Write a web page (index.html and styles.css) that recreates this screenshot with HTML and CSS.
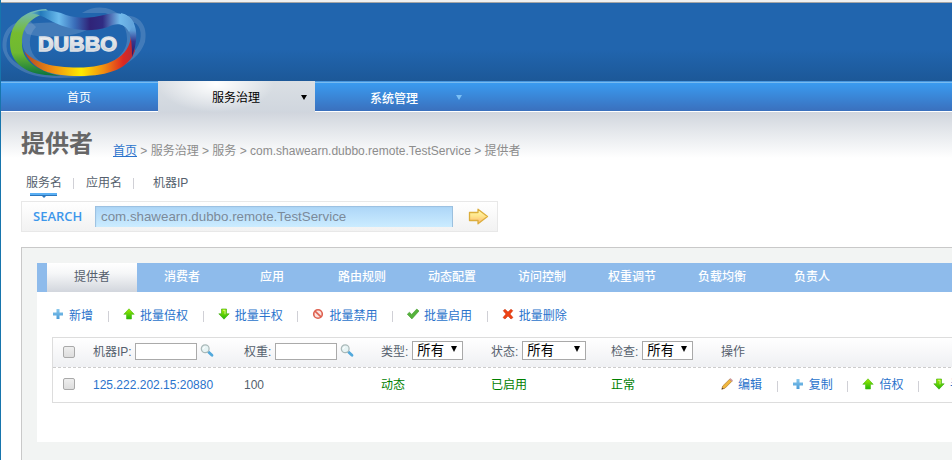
FILE: index.html
```html
<!DOCTYPE html>
<html lang="zh-CN">
<head>
<meta charset="utf-8">
<title>Dubbo Admin</title>
<link rel="stylesheet" href="styles.css">
</head>
<body>
<svg class="defs" width="0" height="0">
  <defs>
    <linearGradient id="green" x1="0" y1="0" x2="0" y2="1"><stop offset="0" stop-color="#a5ec00"/><stop offset="1" stop-color="#22b60a"/></linearGradient>
    <linearGradient id="sky" x1="0" y1="0" x2="0" y2="1"><stop offset="0" stop-color="#8ac8ec"/><stop offset="1" stop-color="#4a9bd8"/></linearGradient>
    <linearGradient id="gold" x1="0" y1="0" x2="0" y2="1"><stop offset="0" stop-color="#ffffb4"/><stop offset=".5" stop-color="#ffe38a"/><stop offset="1" stop-color="#ffb070"/></linearGradient>
    <symbol id="plus" viewBox="0 0 12 12"><path d="M4.500 1h3v3.500h3.500v3h-3.500v3.500h-3v-3.500H1v-3h3.500z" fill="url(#sky)"/></symbol>
    <symbol id="up" viewBox="0 0 12 12"><path d="M6 .8 11.200 6.300H8.500V11h-5V6.300H.8z" fill="url(#green)" stroke="#4cbd12" stroke-width=".6"/></symbol>
    <symbol id="down" viewBox="0 0 12 12"><path d="M6 11.200 11.200 5.800H8.500V1h-5V5.800H.8z" fill="url(#green)" stroke="#38a90d" stroke-width=".6"/><path d="M5 2.300h2v4" fill="none" stroke="#e0f8a0" stroke-width=".8"/></symbol>
    <symbol id="ban" viewBox="0 0 12 12"><circle cx="6" cy="6" r="4.300" fill="#fbe3df" stroke="#de604f" stroke-width="1.600"/><path d="m3 3.200 6 5.600" stroke="#de604f" stroke-width="1.600"/></symbol>
    <symbol id="check" viewBox="0 0 12 12"><path d="M.3 6.200 2.400 4.300 4.700 6.400 9.800 1 12 3 4.900 10.900z" fill="#56b33c" stroke="#3f9a2c" stroke-width=".6"/></symbol>
    <symbol id="cross" viewBox="0 0 12 12"><path d="M1.200 2.700 3 1.200 6 4 9 1.200 10.800 2.700 8 6l3 3.500L9 11 6 8l-3 3-2-1.500L4 6z" fill="#ee4214" stroke="#c52c08" stroke-width=".5"/></symbol>
    <symbol id="pencil" viewBox="0 0 12 12"><path d="m.8 11.200.9-3.200L8.600 1.200l2.200 2.200L4 10.200z" fill="#f0b73c" stroke="#a56f28" stroke-width=".6"/><path d="m8.600 1.200 1-.8 2 2-.8 1z" fill="#dc9a9a" stroke="#a87878" stroke-width=".4"/><path d="m.6 11.400.7-2 1.400 1.400z" fill="#574034"/></symbol>
    <symbol id="lens" viewBox="0 0 14 14"><path d="m8.500 8 3.500 3.300" stroke="#52a9dc" stroke-width="2.800" stroke-linecap="round"/><circle cx="5.200" cy="4.800" r="3.900" fill="#e7f4f5" stroke="#aab9b9" stroke-width="1.200"/><path d="M3.200 5q0-2 2-2" fill="none" stroke="#fff"/></symbol>
  </defs>
</svg>
<div class="frame">
  <div class="chrome-edge"></div>
  <header class="header">
    <svg class="logo" width="150" height="78" viewBox="0 3 150 78">
      <defs>
        <linearGradient id="ringTop" x1="30" y1="0" x2="137" y2="0" gradientUnits="userSpaceOnUse"><stop offset="0" stop-color="#72bdb8"/><stop offset=".1" stop-color="#2379bb"/><stop offset=".27" stop-color="#6bbbed"/><stop offset=".42" stop-color="#396db9"/><stop offset=".56" stop-color="#302378"/><stop offset=".68" stop-color="#302c83"/><stop offset=".84" stop-color="#72baeb"/><stop offset="1" stop-color="#5b9ad5"/></linearGradient>
        <linearGradient id="ringLow" x1="24" y1="0" x2="134" y2="0" gradientUnits="userSpaceOnUse"><stop offset="0" stop-color="#b24822"/><stop offset=".25" stop-color="#ee8a13"/><stop offset=".52" stop-color="#ffeb00"/><stop offset=".73" stop-color="#f18a12"/><stop offset=".9" stop-color="#dd2921"/><stop offset="1" stop-color="#b42b38"/></linearGradient>
        <linearGradient id="ringLeft" x1="34" y1="10" x2="34" y2="76" gradientUnits="userSpaceOnUse"><stop offset="0" stop-color="#71b9c0"/><stop offset=".35" stop-color="#76bc2f"/><stop offset=".65" stop-color="#6fb931"/><stop offset="1" stop-color="#08733e"/></linearGradient>
        <linearGradient id="ringRight" x1="0" y1="18" x2="0" y2="54" gradientUnits="userSpaceOnUse"><stop offset="0" stop-color="#72baeb"/><stop offset=".35" stop-color="#5b9ad5"/><stop offset=".65" stop-color="#34388f"/><stop offset="1" stop-color="#2c1b6c"/></linearGradient>
        <linearGradient id="word" x1="0" y1="0" x2="0" y2="1"><stop offset="0" stop-color="#fff"/><stop offset="1" stop-color="#bfc3c9"/></linearGradient>
      </defs>
      <g fill="#a9bfda" fill-opacity=".25" fill-rule="evenodd">
        <path d="M22 21C6 24 1 37 3 50c5 18 26 28 56 28 44 0 78-12 86-36 4-20-10-30-26-25l6 4c12-1 18 7 15 20-8 24-38 32-78 32-29 0-50-7-55-22-2-12 2-22 14-27z"/>
        <path d="M82 13c14-9 29-6 39 3 12 13 14 32 2 44-12 9-28 14-50 13-30-1-49-13-51-31-1-8 2-16 8-21l6 6c-8 8-8 21-1 30 12 12 36 14 62 10 18-3 30-15 30-28 0-14-8-22-22-26z"/>
        <path d="M20 23c14 2 28-3 42 1 13 4 24 3 30 3-12 9-42 13-65 7z"/>
      </g>
      <path d="M46 9C23 10 10 24 10 43c0 17 11 29 35 32l16 1C37 71 21 61 22 42c0-12 5-24 27-30z" fill="url(#ringLeft)"/>
      <path d="M24 51C35 63 52 67.500 78 67.500c30 0 52-10 53-32.500l4 16c-6 17-25 25-56 25C50 76 33 70 24 51z" fill="url(#ringLow)"/>
      <path d="M121 13c13 3 18 16 14 34l-3 10q0-16-2-23-2-7-7-9z" fill="url(#ringRight)"/>
      <path d="M30 14C42 8.500 54 10 66 15c13 4 26 3 38 0 15-4 25-1 30 8l-5 9c-4-8-12-10-21-5-20 6-38 3-55-5-10-5-15-9-23-8z" fill="url(#ringTop)"/>
      <text x="38" y="51" textLength="79" lengthAdjust="spacingAndGlyphs" class="logo-word">DUBBO</text>
    </svg>
  </header>
  <nav class="nav">
    <a class="nav-item home">首页</a>
    <a class="nav-item service">服务治理<i class="caret"></i></a>
    <a class="nav-item system">系统管理<i class="caret"></i></a>
  </nav>
  <main class="content">
    <div class="heading">
      <h1>提供者</h1>
      <p class="crumbs"><a>首页</a> &gt; 服务治理 &gt; 服务 &gt; com.shawearn.dubbo.remote.TestService &gt; 提供者</p>
    </div>
    <div class="modes">
      <span class="mode current">服务名</span><i class="bar"></i><span class="mode">应用名</span><i class="bar"></i><span class="mode last">机器IP</span>
    </div>
    <form class="search">
      <span class="search-label">SEARCH</span>
      <div class="search-field">com.shawearn.dubbo.remote.TestService</div>
      <svg class="go" width="21" height="17" viewBox="0 0 21 17"><path d="M1.500 4.500H10V1.200L19.500 8.500 10 15.800V12.500H1.500z" fill="url(#gold)" stroke="#dcae3c" stroke-width="1.300" stroke-linejoin="round"/></svg>
    </form>
    <section class="panel">
      <div class="sheet">
        <div class="tabs">
          <a class="tab active">提供者</a><a class="tab">消费者</a><a class="tab">应用</a><a class="tab">路由规则</a><a class="tab">动态配置</a><a class="tab">访问控制</a><a class="tab">权重调节</a><a class="tab">负载均衡</a><a class="tab">负责人</a>
        </div>
        <div class="actions">
          <a class="action"><svg><use href="#plus"/></svg>新增<i class="bar"></i></a>
          <a class="action"><svg><use href="#up"/></svg>批量倍权<i class="bar"></i></a>
          <a class="action"><svg><use href="#down"/></svg>批量半权<i class="bar"></i></a>
          <a class="action"><svg><use href="#ban"/></svg>批量禁用<i class="bar"></i></a>
          <a class="action"><svg><use href="#check"/></svg>批量启用<i class="bar"></i></a>
          <a class="action"><svg><use href="#cross"/></svg>批量删除</a>
        </div>
        <div class="table">
          <div class="row head">
            <div class="cell"><i class="box"></i></div>
            <div class="cell">机器IP:<i class="input"></i><svg class="lens"><use href="#lens"/></svg></div>
            <div class="cell weight">权重:<i class="input"></i><svg class="lens"><use href="#lens"/></svg></div>
            <div class="cell">类型:<span class="select">所有<i class="caret"></i></span></div>
            <div class="cell">状态:<span class="select wide">所有<i class="caret"></i></span></div>
            <div class="cell">检查:<span class="select">所有<i class="caret"></i></span></div>
            <div class="cell">操作</div>
          </div>
          <div class="row">
            <div class="cell"><i class="box"></i></div>
            <div class="cell link">125.222.202.15:20880</div>
            <div class="cell">100</div>
            <div class="cell ok">动态</div>
            <div class="cell ok">已启用</div>
            <div class="cell ok">正常</div>
            <div class="cell ops">
              <a class="action"><svg><use href="#pencil"/></svg>编辑<i class="bar"></i></a>
              <a class="action"><svg><use href="#plus"/></svg>复制<i class="bar"></i></a>
              <a class="action"><svg><use href="#up"/></svg>倍权<i class="bar"></i></a>
              <a class="action"><svg><use href="#down"/></svg>半权</a>
            </div>
          </div>
        </div>
      </div>
    </section>
  </main>
</div>
</body>
</html>
```
FILE: styles.css
```css
* { box-sizing: border-box; }
body {
  margin: 0;
  height: 460px;
  overflow: hidden;
  background: #fff;
  color: #555f6d;
  font: 12px/18px "Liberation Sans", "Noto Sans CJK SC", sans-serif;
}
i { font-style: normal; }
svg { flex: none; display: block; }
.defs { position: absolute; }
.frame { height: 460px; border-left: 1px solid #1775ad; }
.chrome-edge { height: 3px; background: #f0f0f0; border-bottom: 1px solid #a5a5a5; }
.header { height: 78px; background: linear-gradient(#2165ae 0, #2165ae 60%, #1c5898); }
.logo { margin-left: -1px; }
.logo-word { font: bold 20px "Liberation Sans", sans-serif; fill: url(#word); stroke: #dce1e7; stroke-width: 1.3; }

.nav {
  display: flex;
  height: 31px;
  background: linear-gradient(#4897df 0 1px, #78bbf0 1px 2px, #3a9bf0 2px, #3a70bd 30px, #fff 30px);
  color: #fff;
}
.nav-item { display: flex; line-height: 34px; }
.home { width: 157px; padding-left: 66px; }
.service {
  width: 157px;
  padding-left: 54px;
  color: #000;
  background: radial-gradient(ellipse 58px 28px at 58px 3px, #fff, rgba(255,255,255,0)), linear-gradient(#dadfe4, #d0d6de);
}
.system { padding: 1px 0 0 55px; font-weight: 500; }
.caret { width: 0; height: 0; border: 3px solid transparent; border-top: 5px solid #000; border-bottom: 0; }
.nav .caret { margin: 13px 0 0 38px; }
.service .caret { margin-top: 14px; margin-left: 41px; }
.system .caret { border-top-color: #7bc0f5; }

.content { height: 348px; padding-left: 20px; background: linear-gradient(#d0d5dd, #e5e8ec 20px, #fff 46px); }
.heading { display: flex; height: 60px; }
h1 { margin: 12px 20px 0 0; color: #666; font: bold 24px/36px "Noto Sans CJK SC", sans-serif; }
.crumbs { margin: 30px 0 0; color: #8c8c8c; white-space: nowrap; }
.crumbs a { color: #2a73cc; text-decoration: underline; }
.link, .action { color: #2a73cc; }
.bar { width: 1px; height: 11px; background: #d0d0d6; }
.modes { display: flex; height: 29px; padding-left: 5px; }
.mode { line-height: 23px; }
.modes .bar { margin: 6px 12px 0 11px; }
.current { position: relative; }
.current::before { content: ""; position: absolute; left: 4px; top: 21px; width: 27px; height: 3px; background: linear-gradient(#5aaff4 2px, #2c77bd 2px); }
.current::after { content: ""; position: absolute; left: 16px; top: 24px; border: 2px solid transparent; border-top-color: #2c77bd; border-bottom: 0; }
.last { margin-left: 7px; }
.search {
  display: flex;
  align-items: center;
  width: 477px;
  height: 31px;
  margin: 0;
  padding-left: 11px;
  border: 1px solid #e8e8e8;
  background: linear-gradient(#fff, #f2f2f2);
}
.search-label { width: 62px; margin-top: -1px; color: #3d97eb; font: 600 13px/18px "Open Sans", sans-serif; }
.search-field {
  width: 358px;
  height: 21px;
  padding-left: 6px;
  color: #7b8a9a;
  font-size: 13.33px;
  line-height: 22px;
  background: linear-gradient(#acd5f7, #cbecff);
  box-shadow: inset 1px 1px 1px #9bbfdf, inset -1px 0 #9bc0de;
}
.go { margin-left: 15px; }

.panel { height: 213px; margin-top: 15px; padding: 15px 0 0 15px; border: 1px solid #c9c9c9; border-width: 1px 0 0 1px; background: #f2f4f3; }
.sheet { height: 179px; background: #fff; overflow: hidden; }
.tabs { display: flex; height: 29px; padding-left: 10px; background: #8ebbeb; color: #fff; font-weight: 500; }
.tab { width: 90px; text-align: center; line-height: 28px; }
.active { color: #555f6d; font-weight: 400; background: linear-gradient(#fff, #f6f7f8 35%, #d2d6dd); }
.actions { display: grid; grid-template-columns: 71px repeat(5, 94.7px); height: 45px; padding: 2px 0 0 15px; }
.action { display: flex; align-items: center; white-space: nowrap; }
.action svg { width: 12px; height: 12px; margin: -3px 5px 0 0; }
.action .bar { margin: 2px 14px 0 auto; }
.table { width: 980px; height: 66px; margin-left: 15px; border: 1px solid #ddd; }
.row { display: grid; grid-template-columns: 40px 151px 137px 110px 120px 110px 1fr; height: 34px; }
.head { height: 30px; border-bottom: 1px dashed #ccc; background: linear-gradient(#fff, #eff0f3); }
.cell { display: flex; align-items: center; white-space: nowrap; }
.head .cell { height: 28px; }
.box { width: 12px; height: 12px; margin: 0 0 0 10px; border: 1px solid #a9a9a9; border-radius: 2px; background: linear-gradient(#eee, #ddd); }
.row:not(.head) .box { margin-top: -2px; }
.input { width: 62px; height: 17px; margin: -2px 3px 0; border: 1px solid #aaa; background: #fff; }
.weight .input { margin-left: 4px; }
.lens { width: 14px; height: 14px; margin-top: -3px; }
.select { display: flex; align-items: center; justify-content: space-between; width: 51px; height: 19px; margin: -4px 0 0 4px; padding: 2px 5px 0 4px; border: 1px solid #a9a9a9; background: #fff; color: #000; font-size: 13.3px; }
.wide { width: 64px; }
.select .caret { margin-top: -5px; border-width: 6px 3px 0; }
.ok { color: #008000; }
.ops { display: grid; grid-template-columns: repeat(4, 70.7px); }
```
